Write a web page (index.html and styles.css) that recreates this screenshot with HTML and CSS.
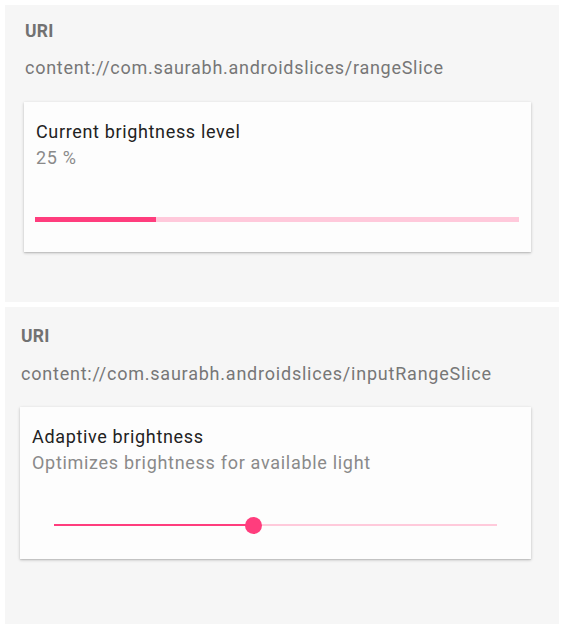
FILE: index.html
```html
<!DOCTYPE html>
<html>
<head>
<meta charset="utf-8">
<link rel="stylesheet" href="styles.css">
</head>
<body>
<section class="panel panel-top">
  <div class="label">URI</div>
  <div class="uri">content://com.saurabh.androidslices/rangeSlice</div>
  <div class="card card-top">
    <div class="title">Current brightness level</div>
    <div class="subtitle">25 %</div>
    <div class="bar"><div class="bar-fill" style="width:25%"></div></div>
  </div>
</section>
<section class="panel panel-bottom">
  <div class="label">URI</div>
  <div class="uri">content://com.saurabh.androidslices/inputRangeSlice</div>
  <div class="card card-bottom">
    <div class="title">Adaptive brightness</div>
    <div class="subtitle">Optimizes brightness for available light</div>
    <div class="slider">
      <div class="slider-track">
        <div class="slider-fill" style="width:45%"></div>
        <div class="slider-thumb" style="left:45%"></div>
      </div>
    </div>
  </div>
</section>
</body>
</html>
```
FILE: styles.css
```css
html, body {
  margin: 0;
  padding: 0;
  background: #ffffff;
}
body {
  font-family: Roboto, "Noto Sans", sans-serif;
  width: 564px;
}
.panel {
  background: #f6f6f6;
  margin: 5px 5px 0 5px;
  box-sizing: border-box;
}
.panel-top {
  padding: 16px 28px 50px 20px;
}
.panel-bottom {
  padding: 19px 28px 65px 16px;
}
.label {
  font-size: 17.5px;
  line-height: 20px;
  font-weight: bold;
  color: #727272;
  letter-spacing: 0.3px;
}
.uri {
  font-size: 18px;
  line-height: 20px;
  color: #777777;
  letter-spacing: 0.72px;
  margin-top: 17px;
}
.panel-bottom .uri {
  margin-top: 18px;
  letter-spacing: 0.78px;
}
.card {
  background: #fdfdfd;
  box-shadow: 0 1px 3px rgba(0, 0, 0, 0.22), 0 1px 1px rgba(0, 0, 0, 0.08);
  padding: 20px 12px 30px 12px;
  margin-top: 24px;
  margin-left: -1px;
}
.card-bottom {
  margin-top: 23px;
  padding-bottom: 25px;
}
.title {
  font-size: 18px;
  line-height: 20px;
  color: #222222;
  letter-spacing: 0.65px;
}
.subtitle {
  font-size: 18px;
  line-height: 20px;
  color: #8a8a8a;
  letter-spacing: 0.7px;
  margin-top: 6px;
}
.bar {
  margin-top: 49px;
  margin-left: -1px;
  height: 5px;
  background: #ffc9db;
  display: flex;
}
.bar-fill {
  background: #ff3d7d;
  height: 100%;
}
.slider {
  margin: 43px 22px 0 22px;
  height: 18px;
  display: flex;
  align-items: center;
}
.slider-track {
  position: relative;
  flex: 1;
  height: 2px;
  background: #ffcadb;
}
.slider-fill {
  height: 100%;
  background: #ff3d7d;
}
.slider-thumb {
  position: absolute;
  top: 50%;
  width: 17px;
  height: 17px;
  margin-left: -8.5px;
  margin-top: -8.5px;
  border-radius: 50%;
  background: #ff3d7d;
}
```
